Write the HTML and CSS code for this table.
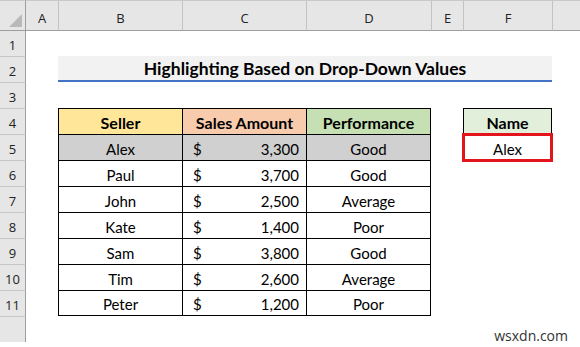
FILE: index.html
```html
<!DOCTYPE html>
<html>
<head>
<meta charset="utf-8">
<link rel="stylesheet" href="styles.css">
</head>
<body>
<div class="sheet">
  <div class="corner"><div class="tri"></div></div>
  <div class="ch ch-a">A</div>
  <div class="ch">B</div>
  <div class="ch">C</div>
  <div class="ch">D</div>
  <div class="ch">E</div>
  <div class="ch">F</div>
  <div class="ch"></div>

  <div class="rh rh1">1</div>
  <div class="rh">2</div>
  <div class="rh">3</div>
  <div class="rh">4</div>
  <div class="rh">5</div>
  <div class="rh">6</div>
  <div class="rh">7</div>
  <div class="rh">8</div>
  <div class="rh">9</div>
  <div class="rh">10</div>
  <div class="rh">11</div>
  <div class="rh"></div>

  <div class="title">Highlighting Based on Drop-Down Values</div>

  <div class="td cB r4 th seller">Seller</div>
  <div class="td cC r4 th sales">Sales Amount</div>
  <div class="td cD r4 th perf">Performance</div>

  <div class="td cB r5 hl">Alex</div>
  <div class="td cC r5 hl money"><span>$</span><span>3,300</span></div>
  <div class="td cD r5 hl">Good</div>

  <div class="td cB r6">Paul</div>
  <div class="td cC r6 money"><span>$</span><span>3,700</span></div>
  <div class="td cD r6">Good</div>

  <div class="td cB r7">John</div>
  <div class="td cC r7 money"><span>$</span><span>2,500</span></div>
  <div class="td cD r7">Average</div>

  <div class="td cB r8">Kate</div>
  <div class="td cC r8 money"><span>$</span><span>1,400</span></div>
  <div class="td cD r8">Poor</div>

  <div class="td cB r9">Sam</div>
  <div class="td cC r9 money"><span>$</span><span>3,800</span></div>
  <div class="td cD r9">Good</div>

  <div class="td cB r10">Tim</div>
  <div class="td cC r10 money"><span>$</span><span>2,600</span></div>
  <div class="td cD r10">Average</div>

  <div class="td cB r11 last">Peter</div>
  <div class="td cC r11 last money"><span>$</span><span>1,200</span></div>
  <div class="td cD r11 last">Poor</div>

  <div class="td cF r4 th namehead">Name</div>
  <div class="cF r5 sel">Alex</div>

  <div class="watermark">wsxdn.com</div>
</div>
</body>
</html>
```
FILE: styles.css
```css
html, body {
  margin: 0;
  padding: 0;
  background: #ffffff;
}

.sheet {
  position: relative;
  width: 580px;
  height: 347px;
  overflow: hidden;
  display: grid;
  grid-template-columns: 26px 32px 124px 124px 125px 32px 89px 1fr;
  grid-template-rows: 31px 25px repeat(11, 26px) 1fr;
  font-family: Lato, "Open Sans", sans-serif;
  color: #000;
  background: #fff;
}

.corner {
  grid-row: 1;
  grid-column: 1;
  background: #e6e6e6;
  border-top: 1px solid #c9c9c9;
  border-right: 1px solid #9d9d9d;
  border-bottom: 1px solid #9d9d9d;
  display: flex;
  align-items: flex-end;
  justify-content: flex-end;
  padding: 0 3px 3px 0;
}

.tri {
  width: 13px;
  height: 13px;
  background: #b9b9b9;
  clip-path: polygon(100% 0, 100% 100%, 0 100%);
}

.ch {
  grid-row: 1;
  background: #e6e6e6;
  border-top: 1px solid #c9c9c9;
  border-left: 1px solid #c3c3c3;
  border-bottom: 1px solid #9d9d9d;
  display: flex;
  align-items: flex-end;
  justify-content: center;
  padding-bottom: 3px;
  font-family: "Open Sans", sans-serif;
  font-size: 13px;
  color: #222;
}

.ch-a {
  border-left: none;
}

.rh {
  grid-column: 1;
  background: #e6e6e6;
  border-right: 1px solid #9d9d9d;
  border-top: 1px solid #c6c6c6;
  display: flex;
  align-items: flex-end;
  justify-content: center;
  padding-bottom: 2px;
  font-family: "Open Sans", sans-serif;
  font-size: 13px;
  color: #222;
}

.rh1 {
  border-top: none;
}

.title {
  grid-row: 3;
  grid-column: 3 / 8;
  background: #f2f2f2;
  border-bottom: 2px solid #4472c4;
  display: flex;
  align-items: center;
  justify-content: center;
  font-weight: bold;
  font-size: 17.5px;
}

.cB { grid-column: 3; }
.cC { grid-column: 4; }
.cD { grid-column: 5; }
.cF { grid-column: 7; }

.r4 { grid-row: 5; }
.r5 { grid-row: 6; }
.r6 { grid-row: 7; }
.r7 { grid-row: 8; }
.r8 { grid-row: 9; }
.r9 { grid-row: 10; }
.r10 { grid-row: 11; }
.r11 { grid-row: 12; }

.td {
  border-left: 1px solid #000;
  border-top: 1px solid #000;
  display: flex;
  align-items: center;
  justify-content: center;
  padding-top: 2px;
  font-size: 15px;
}

.cD, .cF.td {
  border-right: 1px solid #000;
}

.last {
  border-bottom: 1px solid #000;
}

.th {
  font-weight: bold;
  font-size: 16px;
}

.seller { background: #ffe699; }
.sales { background: #f8cbad; }
.perf { background: #c6e0b4; }
.namehead { background: #e2efda; }

.hl { background: #d0d0d0; }

.money {
  justify-content: space-between;
  padding-left: 10px;
  padding-right: 7px;
}

.sel {
  margin: -1px -1px -2px -1px;
  border: 3px solid #e3141b;
  display: flex;
  align-items: center;
  justify-content: center;
  padding-top: 2px;
  font-size: 15px;
  background: #fff;
}

.watermark {
  position: absolute;
  right: 12px;
  bottom: 2px;
  font-family: "Open Sans", sans-serif;
  font-size: 14px;
  color: #333;
}
```
